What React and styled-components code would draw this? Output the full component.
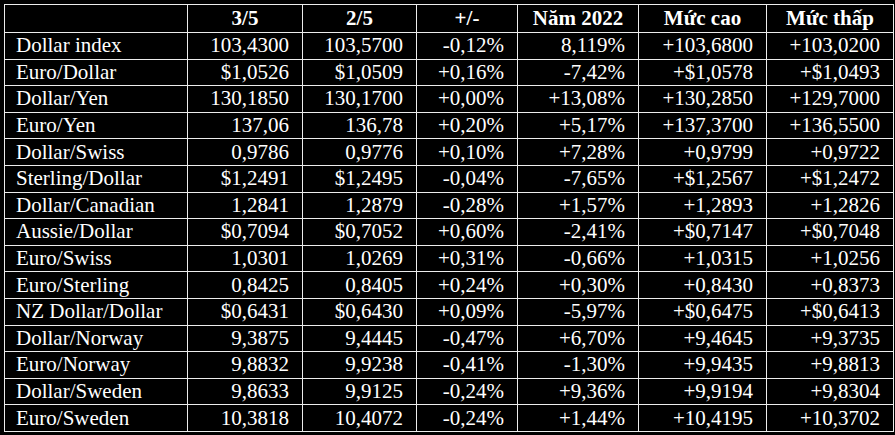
import styled, { createGlobalStyle } from "styled-components";

const GlobalStyle = createGlobalStyle`
  html, body {
    margin: 0;
    padding: 0;
    background: #000;
  }
  body {
    font-family: "Liberation Serif", "Times New Roman", serif;
    color: #fff;
  }
`;

const Page = styled.div`
  width: 895px;
  height: 435px;
  padding: 4px 0 0 4px;
  box-sizing: border-box;
  background: #000;
`;

const Table = styled.table`
  border-collapse: collapse;
  table-layout: fixed;
  width: 890px;
  font-family: "Liberation Serif", "Times New Roman", serif;
  font-size: 21px;
  line-height: 1;
  color: #fff;
`;

const HeadRow = styled.tr`
  height: 28px;
`;

const Row = styled.tr`
  height: 26.6px;
`;

const HeadCell = styled.th`
  border: 1px solid #ececec;
  font-family: "Liberation Serif", "Times New Roman", serif;
  font-weight: bold;
  text-align: center;
  padding: 0 6px;
  white-space: nowrap;
`;

const Cell = styled.td`
  border: 1px solid #ececec;
  font-family: "Liberation Serif", "Times New Roman", serif;
  text-align: ${(props) => (props.$left ? "left" : "right")};
  padding: ${(props) => (props.$left ? "0 0 0 11px" : "0 13px 0 0")};
  white-space: nowrap;
`;

const widths = [183, 115, 114, 101, 121, 128, 127];

const headers = ["", "3/5", "2/5", "+/-", "Năm 2022", "Mức cao", "Mức thấp"];

const rows = [
  ["Dollar index", "103,4300", "103,5700", "-0,12%", "8,119%", "+103,6800", "+103,0200"],
  ["Euro/Dollar", "$1,0526", "$1,0509", "+0,16%", "-7,42%", "+$1,0578", "+$1,0493"],
  ["Dollar/Yen", "130,1850", "130,1700", "+0,00%", "+13,08%", "+130,2850", "+129,7000"],
  ["Euro/Yen", "137,06", "136,78", "+0,20%", "+5,17%", "+137,3700", "+136,5500"],
  ["Dollar/Swiss", "0,9786", "0,9776", "+0,10%", "+7,28%", "+0,9799", "+0,9722"],
  ["Sterling/Dollar", "$1,2491", "$1,2495", "-0,04%", "-7,65%", "+$1,2567", "+$1,2472"],
  ["Dollar/Canadian", "1,2841", "1,2879", "-0,28%", "+1,57%", "+1,2893", "+1,2826"],
  ["Aussie/Dollar", "$0,7094", "$0,7052", "+0,60%", "-2,41%", "+$0,7147", "+$0,7048"],
  ["Euro/Swiss", "1,0301", "1,0269", "+0,31%", "-0,66%", "+1,0315", "+1,0256"],
  ["Euro/Sterling", "0,8425", "0,8405", "+0,24%", "+0,30%", "+0,8430", "+0,8373"],
  ["NZ Dollar/Dollar", "$0,6431", "$0,6430", "+0,09%", "-5,97%", "+$0,6475", "+$0,6413"],
  ["Dollar/Norway", "9,3875", "9,4445", "-0,47%", "+6,70%", "+9,4645", "+9,3735"],
  ["Euro/Norway", "9,8832", "9,9238", "-0,41%", "-1,30%", "+9,9435", "+9,8813"],
  ["Dollar/Sweden", "9,8633", "9,9125", "-0,24%", "+9,36%", "+9,9194", "+9,8304"],
  ["Euro/Sweden", "10,3818", "10,4072", "-0,24%", "+1,44%", "+10,4195", "+10,3702"],
];

export default function App() {
  return (
    <Page>
      <GlobalStyle />
      <Table>
        <colgroup>
          {widths.map((w, i) => (
            <col key={i} style={{ width: w }} />
          ))}
        </colgroup>
        <thead>
          <HeadRow>
            {headers.map((h, i) => (
              <HeadCell key={i}>{h}</HeadCell>
            ))}
          </HeadRow>
        </thead>
        <tbody>
          {rows.map((r) => (
            <Row key={r[0]}>
              {r.map((v, i) => (
                <Cell key={i} $left={i === 0}>
                  {v}
                </Cell>
              ))}
            </Row>
          ))}
        </tbody>
      </Table>
    </Page>
  );
}
